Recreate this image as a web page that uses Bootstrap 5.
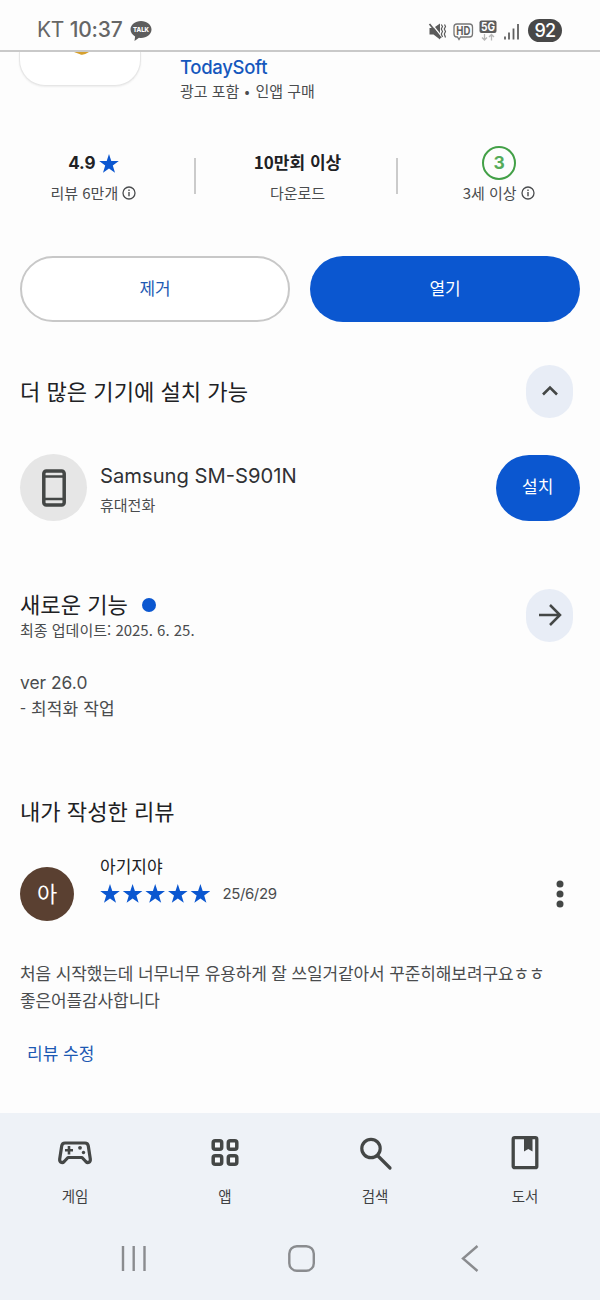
<!DOCTYPE html>
<html lang="ko">
<head>
<meta charset="utf-8">
<meta name="viewport" content="width=device-width, initial-scale=1">
<title>TodaySoft</title>
<link href="https://cdn.jsdelivr.net/npm/bootstrap@5.3.0/dist/css/bootstrap.min.css" rel="stylesheet">
<style>
:root{--ink:#202124;--soft:#4a4c4e;--blue:#0b57d0}
body{font-family:"Noto Sans CJK KR",sans-serif;color:var(--ink);background:#fdfdfd;height:1300px;overflow:hidden}
svg{display:block;flex:none}
.latin{font-family:Inter,"Noto Sans CJK KR",sans-serif}
.status{height:52px;border-bottom:2px solid #c9c9c9;padding:11px 38px 0 37px;color:#666}
.clock{font-size:21px;line-height:38px;letter-spacing:-.25px;white-space:pre}
.talk{margin:10px 0 0 8px}
.battery{width:34px;height:23px;border-radius:12px;background:#484848;color:#fff;font-size:18px;line-height:23px;font-weight:500;letter-spacing:-.7px}
.head{height:94px;padding-left:19px}
.appicon{width:122px;height:34px;border:1px solid #e6e6e6;border-top:0;border-radius:0 0 26px 26px;box-shadow:0 1px 2px #0001;background:#fff;margin-right:39px}
.dev{font-size:18.5px;line-height:26px;font-weight:500;color:#1558bd;margin-top:2px;letter-spacing:-.3px}
.cap{font-size:15px;line-height:22px;color:var(--soft)}
.sep{margin:0 6px 0 5px}
.stats{height:110px}
.stat{height:64px;width:203px}
.stat.first{width:195px;padding-right:8px}
.stat.mid{padding-left:3px}
.stat+.stat::before{content:"";width:2px;height:36px;background:#cbcbcb;position:absolute;left:-1px;top:12px}
.stat .cap{margin-top:2px}
.val{font-size:17px;line-height:32px;height:34px;font-weight:700}
.age{width:34px;height:34px;border:2.5px solid #43a047;border-radius:50%;color:#55ab59;font-size:17.5px;line-height:29px;font-weight:700;margin-left:1px}
.pill{height:66px;border-radius:33px;font-size:17px;font-weight:400;padding:0 0 4px;line-height:1}
.pill-open{background:var(--blue);color:#fff;border:0}
.pill-line{border:2px solid #c8c8c8;color:#1d59b3;background:#fff}
.ttl{font-size:22.1px;line-height:30px;padding-bottom:2px;font-weight:400;margin:0;white-space:nowrap}
.chip{width:47px;height:53px;border-radius:24px;background:#e8edf6;margin-right:7px}
.more{height:54px;margin-top:42px}
.device{height:67px;margin-top:36px}
.disc{width:67px;height:67px;background:#e6e6e6;margin-right:13px}
.model{font-size:20.2px;line-height:28px;letter-spacing:0;color:#303134;margin-top:2px}
.install{width:84.5px}
.news{height:54px;margin-top:67px}
.news .ttl{line-height:29px;padding-bottom:1px}
.dot{width:14px;height:14px;background:var(--blue);margin:2px 0 0 14px}
.body-t{font-size:17px;line-height:27px;color:var(--soft)}
.notes{margin-top:27px}
.notes .latin{font-size:17.4px}
.notes .item{margin-top:-2px;letter-spacing:.15px}
.mine{margin-top:74px}
.author{height:68px;margin-top:26px}
.avatar{width:54px;height:54px;background:#5a4031;color:#fff;font-size:22px;line-height:50px;margin:14px 26px 0 0}
.name{font-size:17px;line-height:26px;margin-bottom:1px}
.date{font-size:15px;line-height:26px;color:var(--soft);margin-left:12.5px;letter-spacing:-.4px;padding-top:1px}
.review{margin-top:38px;white-space:nowrap;letter-spacing:-.12px}
.edit{font-size:17px;line-height:27px;color:#1d59b3;margin:26px 0 0 7px}
.bottom{height:187px;background:#eef2f7;margin-top:47px}
.tabs{height:104px;padding-top:22px}
.tabs span{font-size:14.5px;line-height:22px;color:#3f4143;margin-top:14px}
</style>
</head>
<body class="d-flex flex-column">
<header class="status d-flex justify-content-between flex-shrink-0">
  <div class="d-flex align-items-start latin">
    <span class="clock">KT </span><span class="clock fw-medium">10:37</span>
    <svg class="talk" width="22" height="20" viewBox="0 0 22 20"><path fill="#5d5d5d" d="M11 0c5.800 0 10.500 3.800 10.500 8.600S16.800 17 11 17q-1 0-2-.2L4.500 20l.6-4.500C2.400 14 .5 11.500.5 8.600.5 3.800 5.200 0 11 0z"/><text x="11" y="11.200" text-anchor="middle" font-family="Inter,sans-serif" font-weight="800" font-size="6.600" textLength="16" lengthAdjust="spacingAndGlyphs" fill="#fff">TALK</text></svg>
  </div>
  <div class="d-flex align-items-start pt-2 latin">
    <svg width="93" height="24" viewBox="427.500 18.500 93 24">
      <path fill="#5b5b5b" d="M430 27.500h4l6.500-4.500v16l-6.500-5h-4z"/><path d="M431.500 22.500l11 14" stroke="#fdfdfd" stroke-width="1.300"/><path d="M430 23.500l11.500 14" stroke="#5b5b5b" stroke-width="1.700"/><path d="M441.800 24l1.200 2-1.200 2.500 1.200 2.500-1.200 2.500 1.200 3M445 24l1 2-1.200 2.500 1.200 2.500-1.200 2.500 1.200 3.500" fill="none" stroke="#5b5b5b" stroke-width="1.200"/>
      <path d="M457.500 23.500h12.500q3 0 3 3v7q0 3-3 3h-9l-1.500 2.500-1.500-2.500h-.5q-3 0-3-3v-7q0-3 3-3z" fill="none" stroke="#777" stroke-width="1.300"/>
      <text x="463.800" y="34.300" font-family="Inter,sans-serif" font-size="11.500" font-weight="700" text-anchor="middle" textLength="14" lengthAdjust="spacingAndGlyphs" fill="#606060">HD</text>
      <rect x="480" y="20" width="17" height="12.500" rx="2" fill="#5c5c5c"/><text x="488.500" y="30.300" font-family="Inter,sans-serif" font-size="11.500" font-weight="700" text-anchor="middle" textLength="14" lengthAdjust="spacingAndGlyphs" fill="#fff">5G</text>
      <path d="M485 33.500v6m-2.500-2.500l2.500 2.500 2.500-2.500M492 40v-6m-2.500 2.500l2.500-2.500 2.500 2.500" fill="none" stroke="#b8b8b8" stroke-width="1.300"/>
      <path d="M505.500 36v3M509.500 32v7M514 28v11M518.500 23.500v15.500" stroke="#606060" stroke-width="1.800"/>
    </svg>
    <div class="battery text-center ms-2">92</div>
  </div>
</header>

<section class="head d-flex flex-shrink-0">
  <div class="appicon d-flex justify-content-center"><svg width="16" height="4" viewBox="0 0 16 4" class="ms-1"><path d="M0 0h15q-6 4-9 2.200z" fill="#d6a02d"/></svg></div>
  <div>
    <div class="dev latin">TodaySoft</div>
    <div class="cap d-flex"><span>광고 포함</span><span class="sep">•</span><span>인앱 구매</span></div>
  </div>
</section>

<section class="stats d-flex text-center flex-shrink-0">
  <div class="stat first position-relative d-flex flex-column align-items-center">
    <div class="val d-flex align-items-center latin"><span>4.9</span><svg width="20" height="19" viewBox="0 0 20 19" style="margin-left:3px"><path id="star" fill="#0b57d0" d="M10 0l2.300 6.900 7.500.1-6 4.500 2.200 7.300L10 14.400l-6 4.400 2.200-7.300L.2 7l7.500-.1z"/></svg></div>
    <div class="cap d-flex align-items-center"><span>리뷰 6만개</span><svg class="ms-1" width="14" height="14" viewBox="0 0 14 14"><circle cx="7" cy="7" r="6" fill="none" stroke="#4a4c4e" stroke-width="1.300"/><path d="M7 6v4.300M7 3.500v1.500" stroke="#4a4c4e" stroke-width="1.400"/></svg></div>
  </div>
  <div class="stat mid position-relative">
    <div class="val">10만회 이상</div>
    <div class="cap">다운로드</div>
  </div>
  <div class="stat position-relative d-flex flex-column align-items-center">
    <div class="age latin">3</div>
    <div class="cap d-flex align-items-center"><span>3세 이상</span><svg class="ms-1" width="14" height="14" viewBox="0 0 14 14"><circle cx="7" cy="7" r="6" fill="none" stroke="#4a4c4e" stroke-width="1.300"/><path d="M7 6v4.300M7 3.500v1.500" stroke="#4a4c4e" stroke-width="1.400"/></svg></div>
  </div>
</section>

<main class="flex-shrink-0" style="padding:0 20px">
  <div class="d-flex" style="gap:20px">
    <button class="btn pill pill-line flex-fill w-50">제거</button>
    <button class="btn pill pill-open flex-fill w-50">열기</button>
  </div>
  <div class="more d-flex justify-content-between align-items-center">
    <h2 class="ttl">더 많은 기기에 설치 가능</h2>
    <div class="chip d-flex align-items-center justify-content-center"><svg width="18" height="12" viewBox="0 0 18 12"><path d="M2 9.500l7-7 7 7" fill="none" stroke="#444746" stroke-width="2.600"/></svg></div>
  </div>
  <div class="device d-flex align-items-center">
    <div class="disc rounded-circle d-flex align-items-center justify-content-center"><svg width="24" height="38" viewBox="0 0 24 38"><rect x="1.800" y="2" width="20.400" height="34" rx="2.500" fill="none" stroke="#444746" stroke-width="3.500"/><path d="M2 7.500h20M2 30h20" stroke="#444746" stroke-width="2.600"/></svg></div>
    <div class="flex-grow-1"><div class="model latin">Samsung SM-S901N</div><div class="cap mt-1">휴대전화</div></div>
    <button class="btn pill pill-open install">설치</button>
  </div>
  <div class="news d-flex justify-content-between align-items-center">
    <div><div class="d-flex align-items-center"><h2 class="ttl">새로운 기능</h2><i class="dot rounded-circle"></i></div><div class="cap">최종 업데이트: 2025. 6. 25.</div></div>
    <div class="chip d-flex align-items-center justify-content-center"><svg width="24" height="24" viewBox="0 0 24 24"><path d="M1 12h20M12 2l10 10-10 10" fill="none" stroke="#444746" stroke-width="2.500"/></svg></div>
  </div>
  <div class="body-t notes"><div class="latin">ver 26.0</div><div class="item">- 최적화 작업</div></div>
  <h2 class="ttl mine">내가 작성한 리뷰</h2>
  <div class="author d-flex">
    <div class="avatar rounded-circle text-center">아</div>
    <div class="flex-grow-1"><div class="name">아기지야</div>
      <div class="d-flex align-items-center"><svg width="110" height="19" viewBox="0 0 110 19"><use href="#star"/><use href="#star" x="22.600"/><use href="#star" x="45.200"/><use href="#star" x="67.800"/><use href="#star" x="90.400"/></svg><span class="date latin">25/6/29</span></div></div>
    <svg width="8" height="28" viewBox="0 0 8 28" style="margin:27px 16px 0 0" fill="#444746"><circle cx="4" cy="4" r="3.500"/><circle cx="4" cy="14" r="3.500"/><circle cx="4" cy="24" r="3.500"/></svg>
  </div>
  <p class="body-t review mb-0">처음 시작했는데 너무너무 유용하게 잘 쓰일거같아서 꾸준히해보려구요ㅎㅎ<br>좋은어플감사합니다</p>
  <div class="edit">리뷰 수정</div>
</main>

<footer class="bottom flex-shrink-0">
  <nav class="tabs row g-0">
    <div class="col d-flex flex-column align-items-center"><svg width="36" height="36" viewBox="0 0 36 36" fill="none" stroke="#444746"><path stroke-width="3.200" stroke-linejoin="round" d="M8 8h20c2 0 3 1 3.300 3l2 13c.4 3.500-2.500 4.500-4.500 2.500L25 22.500H11l-3.800 4c-2 2-4.900 1-4.500-2.500l2-13C5 9 6 8 8 8z"/><path stroke-width="2.600" d="M12 11v8.500M8 15.200h8"/><g fill="#444746" stroke="none"><circle cx="23" cy="12.800" r="1.900"/><circle cx="26.500" cy="17.500" r="1.700"/></g></svg><span>게임</span></div>
    <div class="col d-flex flex-column align-items-center"><svg width="36" height="36" viewBox="0 0 36 36" fill="#f8fafc" stroke="#444746" stroke-width="3.500"><rect x="6.200" y="5.800" width="8.500" height="8.500" rx="2"/><rect x="21.300" y="5.800" width="8.500" height="8.500" rx="2"/><rect x="6.200" y="20.800" width="8.500" height="8.500" rx="2"/><rect x="21.300" y="20.800" width="8.500" height="8.500" rx="2"/></svg><span>앱</span></div>
    <div class="col d-flex flex-column align-items-center"><svg width="36" height="36" viewBox="0 0 36 36" fill="none" stroke="#444746" stroke-width="3.200"><circle cx="14" cy="13.500" r="9.200"/><path d="M20.500 20.500L33 33" stroke-linecap="round"/></svg><span>검색</span></div>
    <div class="col d-flex flex-column align-items-center"><svg width="36" height="36" viewBox="0 0 36 36"><rect x="6.200" y="2.700" width="23.600" height="30" rx="1.500" fill="#f1f4f9" stroke="#444746" stroke-width="3.300"/><path fill="#444746" d="M17 2h8.500v14.500l-4.200-2.500-4.300 2.500z"/></svg><span>도서</span></div>
  </nav>
  <svg width="600" height="83" viewBox="0 1217 600 83" fill="none" stroke="#8a8c8f" stroke-width="2.400"><path d="M123 1246v25M133.700 1246v25M144.500 1246v25"/><rect x="289.300" y="1246.200" width="24.500" height="24.500" rx="7.500"/><path d="M477.500 1246l-14.500 12.500 14.500 12.500"/></svg>
</footer>
<script src="https://cdn.jsdelivr.net/npm/bootstrap@5.3.0/dist/js/bootstrap.bundle.min.js"></script>
</body>
</html>
